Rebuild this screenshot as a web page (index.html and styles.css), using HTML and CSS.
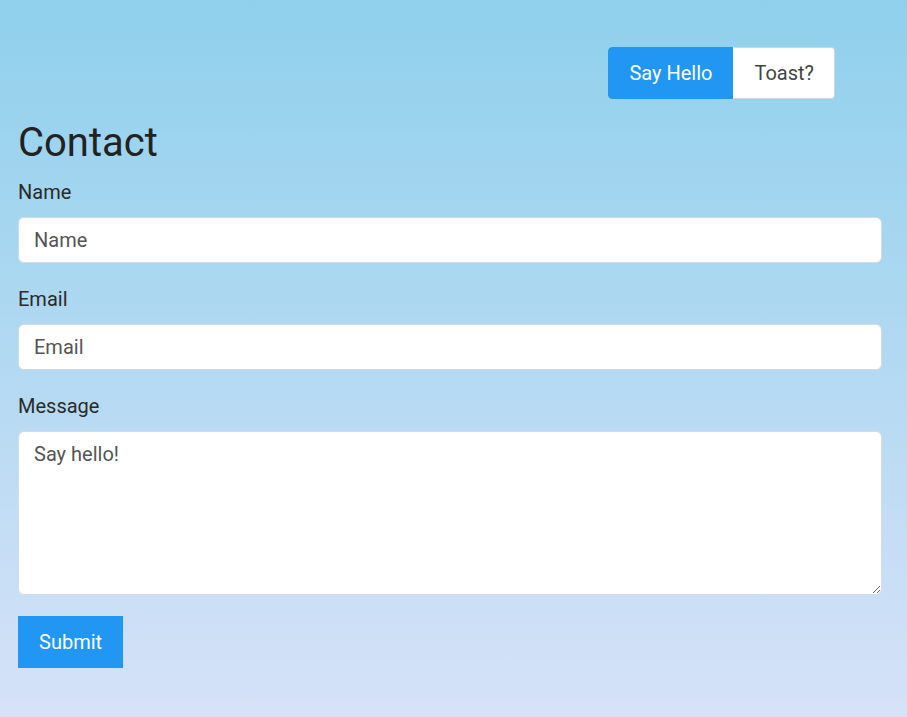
FILE: index.html
```html
<!DOCTYPE html>
<html lang="en">
<head>
<meta charset="utf-8">
<title>Contact</title>
<link rel="stylesheet" href="styles.css">
</head>
<body>
<div class="page">
  <div class="topbar">
    <div class="btn-group">
      <button class="btn btn-primary">Say Hello</button>
      <button class="btn btn-light">Toast?</button>
    </div>
  </div>
  <h1 class="title">Contact</h1>
  <form class="form">
    <div class="field">
      <label class="label" for="name">Name</label>
      <input class="input" id="name" type="text" placeholder="Name">
    </div>
    <div class="field">
      <label class="label" for="email">Email</label>
      <input class="input" id="email" type="email" placeholder="Email">
    </div>
    <div class="field">
      <label class="label" for="msg">Message</label>
      <textarea class="input textarea" id="msg" placeholder="Say hello!"></textarea>
    </div>
    <button type="button" class="submit">Submit</button>
  </form>
</div>
</body>
</html>
```
FILE: styles.css
```css
html, body {
  margin: 0;
  min-height: 100%;
}
body {
  font-family: Roboto, "Liberation Sans", sans-serif;
  font-size: 20px;
  line-height: 1.5;
  color: #222;
  background: linear-gradient(to bottom, #8fd0ec 0%, #d6e2f8 717px);
  min-height: 717px;
}
.page {
  padding: 47px 25px 0 18px;
}
.topbar {
  display: flex;
  justify-content: flex-end;
  padding-right: 47px;
}
.btn-group {
  display: flex;
  border-radius: 4px;
  overflow: hidden;
}
.btn {
  font-family: inherit;
  font-size: 20px;
  line-height: 30px;
  padding: 10px 20px;
  margin: 0;
  border: 1px solid transparent;
  cursor: pointer;
}
.btn-primary {
  background: #2196f3;
  border-color: #2196f3;
  color: #fff;
  border-radius: 4px 0 0 4px;
}
.btn-light {
  background: #fff;
  color: #444;
  border-color: #cfd6df;
  border-left-color: #fff;
  border-radius: 0 4px 4px 0;
}
.title {
  margin: 20px 0 10px;
  font-size: 40px;
  font-weight: 400;
  line-height: 48px;
  color: #222;
}
.form {
  display: flex;
  flex-direction: column;
  align-items: flex-start;
}
.field {
  display: flex;
  flex-direction: column;
  gap: 10px;
  width: 100%;
  margin-bottom: 21px;
}
.label {
  font-size: 20px;
  line-height: 30px;
  color: #2a2a2a;
}
.input {
  box-sizing: border-box;
  width: 100%;
  height: 46px;
  margin: 0;
  padding: 7px 15px;
  font-family: inherit;
  font-size: 20px;
  line-height: 30px;
  color: #333;
  background: #fff;
  border: 1px solid #d3dbe4;
  border-radius: 6px;
  outline: none;
}
.input::placeholder {
  color: #555;
  opacity: 1;
}
.textarea {
  height: 164px;
  resize: vertical;
  display: block;
}
.submit {
  font-family: inherit;
  font-size: 20px;
  line-height: 30px;
  padding: 11px 21px;
  border: 0;
  border-radius: 0;
  background: #2196f3;
  color: #fff;
  margin: 0;
  cursor: pointer;
}
```
